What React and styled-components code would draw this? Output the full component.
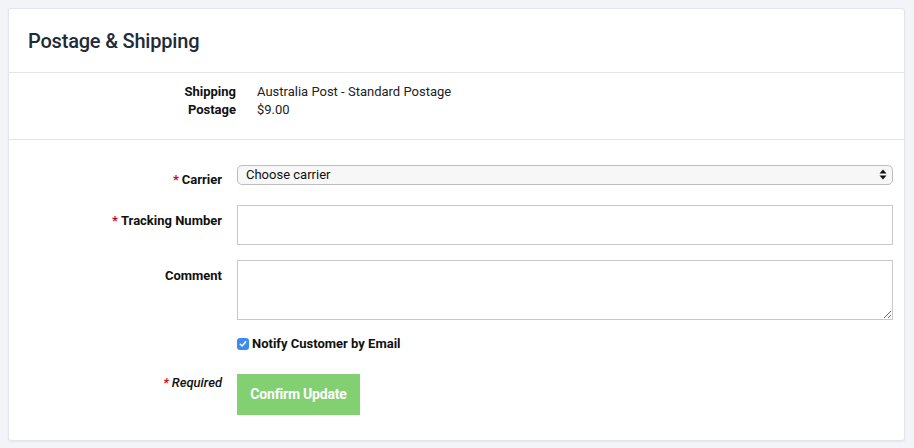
import React from 'react';
import styled, { createGlobalStyle } from 'styled-components';

const GlobalStyle = createGlobalStyle`
  html, body {
    margin: 0;
    background: #f3f4f8;
  }
  body {
    padding: 8px;
    font-family: Roboto, "Liberation Sans", Arial, sans-serif;
    color: #111;
  }
`;

const Card = styled.div`
  width: 895px;
  background: #fff;
  border: 1px solid #e3e5ea;
  border-radius: 3px;
  box-shadow: 0 1px 2px rgba(0, 0, 0, 0.06);
`;

const Header = styled.div`
  height: 63px;
  display: flex;
  align-items: center;
  padding: 0 19px;
  border-bottom: 1px solid #e2e4e8;
`;

const Title = styled.h2`
  margin: 0;
  font-size: 20px;
  font-weight: 500;
  color: #1e2b38;
  letter-spacing: -0.2px;
`;

const InfoSection = styled.div`
  padding: 10px 0 20px;
  border-bottom: 1px solid #e2e4e8;
  display: grid;
  grid-template-columns: 227px 1fr;
  column-gap: 21px;
  font-size: 13px;
  line-height: 18px;
`;

const InfoLabel = styled.div`
  text-align: right;
  font-weight: 700;
`;

const InfoValue = styled.div`
  color: #222;
`;

const Form = styled.form`
  padding: 24px 11px 25px 0;
  display: grid;
  grid-template-columns: 213px 1fr;
  column-gap: 15px;
  align-items: start;
`;

const Label = styled.label`
  text-align: right;
  font-size: 13px;
  font-weight: ${p => (p.$italic ? 500 : 700)};
  line-height: 16px;
  padding-top: ${p => p.$top || 8}px;
  font-style: ${p => (p.$italic ? 'italic' : 'normal')};
`;

const Star = styled.span`
  color: #d0021b;
  margin-right: 3px;
`;

const Field = styled.div`
  margin-bottom: ${p => p.$gap || 0}px;
  position: relative;
`;

const Select = styled.select`
  appearance: none;
  width: 100%;
  height: 20px;
  margin: 0;
  padding: 0 24px 0 8px;
  border: 1px solid #bdbdbd;
  border-radius: 5px;
  background: #f7f7f7;
  font-family: Roboto, "Liberation Sans", Arial, sans-serif;
  font-size: 13px;
  color: #111;
  outline: none;
`;

const SelectArrows = styled.svg`
  position: absolute;
  right: 6px;
  top: 5px;
  pointer-events: none;
`;

const Input = styled.input`
  display: block;
  box-sizing: border-box;
  width: 100%;
  height: 40px;
  margin: 0;
  border: 1px solid #c8c8c8;
  border-radius: 0;
  padding: 0 8px;
  font-size: 13px;
  outline: none;
`;

const TextArea = styled.textarea`
  display: block;
  box-sizing: border-box;
  width: 100%;
  height: 60px;
  margin: 0;
  border: 1px solid #c8c8c8;
  border-radius: 0;
  padding: 6px 8px;
  font-family: inherit;
  font-size: 13px;
  outline: none;
`;

const CheckRow = styled.label`
  display: flex;
  align-items: center;
  gap: 3px;
  font-size: 13px;
  font-weight: 700;
  line-height: 16px;
`;

const CheckBox = styled.span`
  width: 12px;
  height: 12px;
  border-radius: 3px;
  background: #3c8cf0;
  display: flex;
  align-items: center;
  justify-content: center;
`;

const Button = styled.button`
  width: 123px;
  height: 41px;
  border: none;
  border-radius: 0;
  background: #83d072;
  color: #fff;
  font-family: Roboto, "Liberation Sans", Arial, sans-serif;
  font-size: 14px;
  font-weight: 700;
  letter-spacing: -0.2px;
  cursor: pointer;
`;

export default function App() {
  return (
    <>
      <GlobalStyle />
      <Card>
        <Header>
          <Title>Postage &amp; Shipping</Title>
        </Header>

        <InfoSection>
          <InfoLabel>Shipping</InfoLabel>
          <InfoValue>Australia Post - Standard Postage</InfoValue>
          <InfoLabel>Postage</InfoLabel>
          <InfoValue>$9.00</InfoValue>
        </InfoSection>

        <Form onSubmit={e => e.preventDefault()}>
          <Label><Star>*</Star>Carrier</Label>
          <Field $gap={20}>
            <Select defaultValue="">
              <option value="">Choose carrier</option>
              <option value="ap">Australia Post</option>
            </Select>
            <SelectArrows width="8" height="11" viewBox="0 0 8 11">
              <path d="M4 0.5 L7.5 4.5 H0.5 Z" fill="#111" />
              <path d="M4 10.5 L7.5 6.5 H0.5 Z" fill="#111" />
            </SelectArrows>
          </Field>

          <Label><Star>*</Star>Tracking Number</Label>
          <Field $gap={15}>
            <Input type="text" />
          </Field>

          <Label>Comment</Label>
          <Field $gap={16}>
            <TextArea />
          </Field>

          <div />
          <Field $gap={22}>
            <CheckRow>
              <CheckBox>
                <svg width="8" height="8" viewBox="0 0 8 8">
                  <path d="M1.3 4.2 L3.2 6 L6.7 1.8" fill="none" stroke="#fff" strokeWidth="1.5" strokeLinecap="round" strokeLinejoin="round" />
                </svg>
              </CheckBox>
              Notify Customer by Email
            </CheckRow>
          </Field>

          <Label $italic $top={1}><Star>*</Star>Required</Label>
          <Field>
            <Button type="submit">Confirm Update</Button>
          </Field>
        </Form>
      </Card>
    </>
  );
}
